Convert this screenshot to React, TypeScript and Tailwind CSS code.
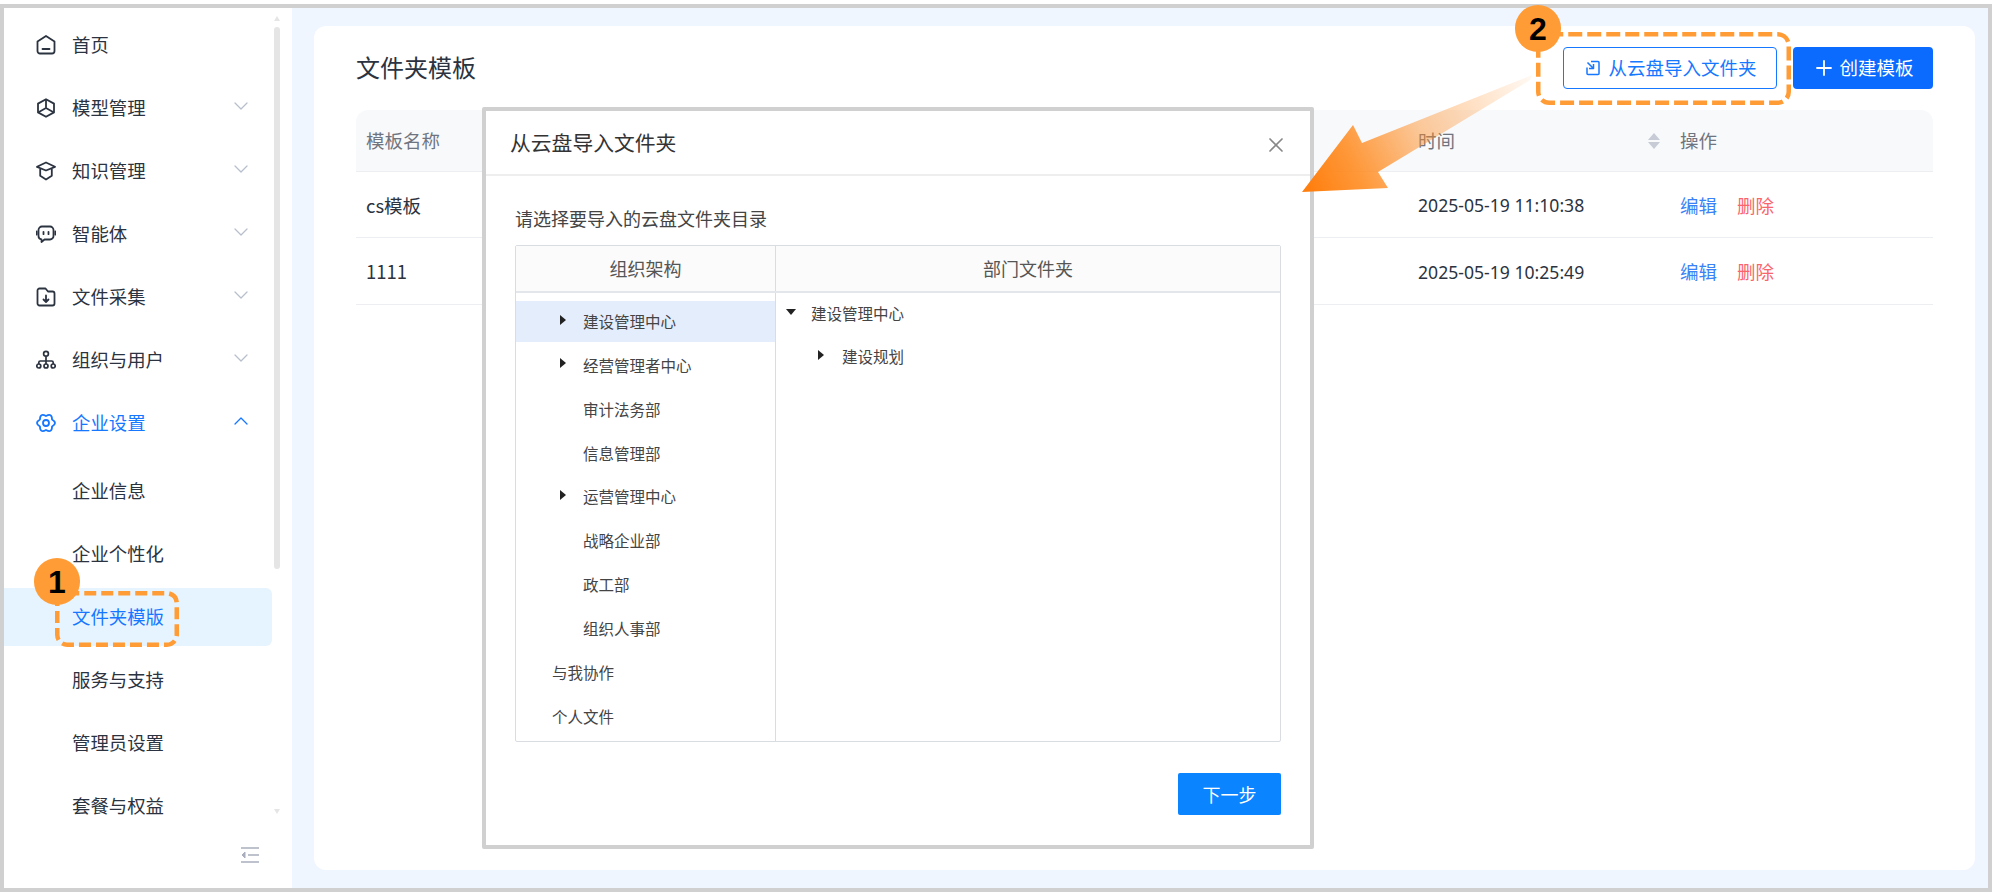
import React from "react";
import { ChevronDown, ChevronUp, Plus, X } from "lucide-react";

const font = "font-['Noto_Sans_CJK_SC','Noto_Sans',sans-serif]";

const HomeIcon = () => (
    <svg width="20" height="20" viewBox="0 0 20 20" fill="none" stroke="currentColor" strokeWidth="1.8" strokeLinejoin="round" strokeLinecap="round">
        <path d="M1.500 6.500 10 1l8.500 5.500V16a2.500 2.500 0 0 1-2.500 2.500H4A2.500 2.500 0 0 1 1.500 16z" />
        <path d="M6.500 14h7" />
    </svg>
);
const ModelIcon = () => (
    <svg width="20" height="20" viewBox="0 0 20 20" fill="none" stroke="currentColor" strokeWidth="1.8" strokeLinejoin="round">
        <path d="M10 1.200 18 5.600v8.800l-8 4.400-8-4.400V5.600z" />
        <path d="M10 1.500V10M10 10l7.500 4.200M10 10l-7.500 4.200" />
    </svg>
);
const KnowledgeIcon = () => (
    <svg width="20" height="20" viewBox="0 0 20 20" fill="none" stroke="currentColor" strokeWidth="1.8" strokeLinejoin="round">
        <path d="M10 1.500 19 5.800 10 9.500 1 5.800z" />
        <path d="M4.200 8v6.800L10 18.500l5.800-3.700V8" />
    </svg>
);
const AgentIcon = () => (
    <svg width="20" height="20" viewBox="0 0 20 20" fill="none" stroke="currentColor" strokeWidth="1.8" strokeLinejoin="round" strokeLinecap="round">
        <path d="M6 2.500h8A3.500 3.500 0 0 1 17.500 6v6a3.500 3.500 0 0 1-3.500 3.500H8.500l-3 2.500v-2.600A3.500 3.500 0 0 1 2.500 12V6A3.500 3.500 0 0 1 6 2.500z" />
        <path d="M.7 7.500v3M19.300 7.500v3M7.500 7.800v2.400M12.500 7.800v2.400" />
    </svg>
);
const CollectIcon = () => (
    <svg width="20" height="20" viewBox="0 0 20 20" fill="none" stroke="currentColor" strokeWidth="1.8" strokeLinejoin="round" strokeLinecap="round">
        <path d="M1.500 3.500a2 2 0 0 1 2-2h6l2.500 3h4.500a2 2 0 0 1 2 2v10a2 2 0 0 1-2 2h-13a2 2 0 0 1-2-2z" />
        <path d="M10 8.500v6M7.500 12.500 10 15l2.500-2.500" />
    </svg>
);
const OrgIcon = () => (
    <svg width="20" height="20" viewBox="0 0 20 20" fill="none" stroke="currentColor" strokeWidth="1.7">
        <circle cx="10" cy="3.800" r="2.400" />
        <circle cx="2.800" cy="16" r="2" />
        <circle cx="10" cy="16" r="2" />
        <circle cx="17.200" cy="16" r="2" />
        <path d="M2.800 14v-1.500A1.500 1.500 0 0 1 4.300 11h11.400a1.500 1.500 0 0 1 1.500 1.500V14M10 6.500V14" />
    </svg>
);
const GearIcon = () => (
    <svg width="20" height="20" viewBox="0 0 20 20" fill="none" stroke="currentColor" strokeWidth="1.8" strokeLinejoin="round">
        <path d="M16.060 6.500Q22 10 16.060 13.500Q16 20.400 10 17Q4 20.400 3.940 13.500Q-2 10 3.940 6.500Q4 -.4 10 3Q16 -.4 16.060 6.500z" />
        <circle cx="10" cy="10" r="3" />
    </svg>
);

const menuItems = [
    { label: "首页", icon: <HomeIcon /> },
    { label: "模型管理", icon: <ModelIcon />, arrow: true },
    { label: "知识管理", icon: <KnowledgeIcon />, arrow: true },
    { label: "智能体", icon: <AgentIcon />, arrow: true },
    { label: "文件采集", icon: <CollectIcon />, arrow: true },
    { label: "组织与用户", icon: <OrgIcon />, arrow: true },
];

const subItems = ["企业信息", "企业个性化", "文件夹模版", "服务与支持", "管理员设置", "套餐与权益"];

function Sidebar() {
    return (
        <div className="relative flex h-full w-[288px] shrink-0 bg-white">
            <div className="w-[268px] pt-[5px]">
                {menuItems.map((item) => (
                    <div key={item.label} className="flex h-[63px] items-center pl-[32px] pr-[19px] text-[18.400px] text-[#2b3340]">
                        <span className="mr-[16px] flex w-[20px] justify-center">{item.icon}</span>
                        <span className="flex-1">{item.label}</span>
                        {item.arrow && <ChevronDown size={24} strokeWidth={1.300} className="-mt-[4px] text-[#b8bfcc]" />}
                    </div>
                ))}
                <div className="flex h-[63px] items-center pl-[32px] pr-[19px] text-[18.400px] text-[#1677ff]">
                    <span className="mr-[16px] flex w-[20px] justify-center"><GearIcon /></span>
                    <span className="flex-1">企业设置</span>
                    <ChevronUp size={24} strokeWidth={1.300} className="-mt-[4px]" />
                </div>
                <div className="pt-[5px]">
                    {subItems.map((label) => (
                        <div
                            key={label}
                            className={`flex h-[63px] items-center pl-[68px] text-[18.400px] ${
                                label === "文件夹模版" ? "text-[#1677ff]" : "text-[#2b3340]"
                            }`}
                        >
                            {label === "文件夹模版" && (
                                <span className="absolute left-0 h-[58px] w-[268px] rounded-r-[6px] bg-[#e6f4ff]" />
                            )}
                            <span className="relative">{label}</span>
                        </div>
                    ))}
                </div>
            </div>
            {/* scrollbar */}
            <div className="absolute left-[270px] top-[19px] h-[542px] w-[6px] rounded-[3px] bg-[#e5e5e5]" />
            <div className="absolute left-[270px] top-[8px] h-0 w-0 border-x-[3px] border-b-[5px] border-x-transparent border-b-[#e5e5e5]" />
            <div className="absolute left-[270px] top-[801px] h-0 w-0 border-x-[3px] border-t-[5px] border-x-transparent border-t-[#e5e5e5]" />
            <svg className="absolute left-[237px] top-[839px]" width="18" height="16" viewBox="0 0 18 16" fill="none" stroke="#a9afbd" strokeWidth="1.600">
                <path d="M0 1h18M7 8h11M0 15h18" />
                <path d="M4 5 1 8l3 3z" fill="#a9afbd" strokeWidth="1" />
            </svg>
        </div>
    );
}

function Table() {
    const rows = [
        { name: "cs模板", time: "2025-05-19 11:10:38" },
        { name: "1111", time: "2025-05-19 10:25:49" },
    ];
    return (
        <div className="text-[18.500px]">
            <div className="flex h-[62px] items-center rounded-t-[12px] border-b border-[#eceef2] bg-[#f8f9fb] text-[#6f7580]">
                <span className="ml-[10px] w-[1052px]">模板名称</span>
                <span className="w-[230px]">时间</span>
                <span className="flex w-[32px] flex-col items-start gap-[2px]">
                    <span className="h-0 w-0 border-x-[6px] border-b-[7px] border-x-transparent border-b-[#c6cbd5]" />
                    <span className="h-0 w-0 border-x-[6px] border-t-[7px] border-x-transparent border-t-[#c6cbd5]" />
                </span>
                <span>操作</span>
            </div>
            {rows.map((row, i) => (
                <div key={row.name} className={`flex items-center border-b border-[#eceef2] pt-[2px] text-[#2b3340] ${i === 0 ? "h-[66px]" : "h-[67px]"}`}>
                    <span className="ml-[10px] w-[1052px]">{row.name}</span>
                    <span className="w-[262px] font-['Noto_Sans','Noto_Sans_CJK_SC',sans-serif] text-[17.600px]">{row.time}</span>
                    <span className="text-[#3b82f6]">编辑</span>
                    <span className="ml-[20px] text-[#f9656d]">删除</span>
                </div>
            ))}
        </div>
    );
}

const Caret = ({ down }: { down?: boolean }) =>
    down ? (
        <span className="mb-[4px] h-0 w-0 border-x-[5px] border-t-[6px] border-x-transparent border-t-[#222]" />
    ) : (
        <span className="mb-[4px] h-0 w-0 border-y-[5px] border-l-[6px] border-y-transparent border-l-[#222]" />
    );

function Modal() {
    const orgs = [
        { label: "建设管理中心", caret: true, active: true },
        { label: "经营管理者中心", caret: true },
        { label: "审计法务部" },
        { label: "信息管理部" },
        { label: "运营管理中心", caret: true },
        { label: "战略企业部" },
        { label: "政工部" },
        { label: "组织人事部" },
    ];
    return (
        <div className="absolute left-[482px] top-[107px] flex h-[742px] w-[832px] flex-col rounded-[2px] border-[4px] border-[#d0d0d0] bg-white">
            <div className="flex h-[65px] items-center justify-between border-b-2 border-[#eeeeee] pl-[24px] pr-[22px]">
                <span className="text-[20.800px] text-[#333]">从云盘导入文件夹</span>
                <X size={24} strokeWidth={1.700} className="mt-[4px] text-[#888]" />
            </div>
            <div className="px-[29px] pt-[29px]">
                <div className="text-[18px] leading-[26px] text-[#444]">请选择要导入的云盘文件夹目录</div>
                <div className="mt-[14px] flex h-[497px] w-[766px] flex-col rounded-[2px] border border-[#d9dde2]">
                    <div className="flex h-[47px] shrink-0 border-b-2 border-[#e3e6ea] bg-[#fbfbfb] text-[18px] text-[#555]">
                        <div className="flex w-[260px] items-center justify-center border-r border-[#d9dde2]">组织架构</div>
                        <div className="flex flex-1 items-center justify-center">部门文件夹</div>
                    </div>
                    <div className="flex flex-1">
                        <div className="flex w-[260px] flex-col gap-[2.900px] border-r border-[#d9dde2] pt-[8px] text-[15.500px] text-[#444]">
                            {orgs.map((org) => (
                                <div key={org.label} className={`flex h-[41px] items-center pl-[44px] ${org.active ? "bg-[#e4edfc]" : ""}`}>
                                    <span className="flex w-[23px] items-center">{org.caret && <Caret />}</span>
                                    {org.label}
                                </div>
                            ))}
                            <div className="flex h-[41px] items-center pl-[36px]">与我协作</div>
                            <div className="flex h-[41px] items-center pl-[36px]">个人文件</div>
                        </div>
                        <div className="flex-1 pl-[10px] text-[15.500px] text-[#444]">
                            <div className="flex h-[41px] items-center">
                                <span className="flex w-[25px] items-center"><Caret down /></span>
                                建设管理中心
                            </div>
                            <div className="flex h-[45px] items-center pl-[32px]">
                                <span className="flex w-[24px] items-center"><Caret /></span>
                                建设规划
                            </div>
                        </div>
                    </div>
                </div>
                <div className="mt-[31px] flex justify-end">
                    <button className="h-[42px] w-[103px] rounded-[2px] bg-[#0a84ff] text-[18px] text-white">下一步</button>
                </div>
            </div>
        </div>
    );
}

const Badge = ({ n, className }: { n: string; className: string }) => (
    <div className={`absolute flex h-[47px] w-[46px] items-center justify-center rounded-full bg-[#ff9c35] font-['Liberation_Sans',sans-serif] text-[32px] font-bold text-black ${className}`}>
        {n}
    </div>
);

export default function App() {
    return (
        <div className={`relative h-[892px] w-[1992px] overflow-hidden bg-white pt-[4px] ${font}`}>
            <div className="flex h-[888px] border-[4px] border-[#d0d0d0] bg-[#f0f6ff]">
                <Sidebar />
                <div className="flex-1 pb-[18px] pl-[22px] pr-[13px] pt-[18px]">
                    <div className="h-full rounded-[12px] bg-white px-[42px] pt-[21px]">
                        <div className="mb-[21px] flex h-[42px] items-center justify-between">
                            <h1 className="-mt-[2px] text-[24px] text-[#2b3340]">文件夹模板</h1>
                            <div className="flex gap-[16px]">
                                <button className="flex h-[42px] w-[214px] items-center justify-center gap-[7px] rounded-[4px] border border-[#1677ff] pl-[2px] text-[18.500px] text-[#1677ff]">
                                    <svg width="16" height="16" viewBox="0 0 16 16" fill="none" stroke="currentColor" strokeWidth="1.500" strokeLinejoin="round">
                                        <path d="M6 1.500h7a1 1 0 0 1 1 1v11a1 1 0 0 1-1 1H3a1 1 0 0 1-1-1V7.500" />
                                        <path d="M2.500 2.500 8.500 8.500M8.500 4v4.500H4" />
                                    </svg>
                                    从云盘导入文件夹
                                </button>
                                <button className="flex h-[42px] w-[140px] items-center justify-center gap-[3px] rounded-[4px] bg-[#0b6bff] text-[18.500px] text-white">
                                    <Plus size={24} strokeWidth={1.800} />
                                    创建模板
                                </button>
                            </div>
                        </div>
                        <Table />
                    </div>
                </div>
            </div>

            <Modal />

            {/* annotations */}
            <svg className="absolute left-0 top-0" width="1992" height="892" fill="none">
                <defs>
                    <linearGradient id="arrowFill" gradientUnits="userSpaceOnUse" x1="1532" y1="76" x2="1310" y2="190">
                        <stop offset="0" stopColor="#ff8a1e" stopOpacity="0.05" />
                        <stop offset="0.5" stopColor="#ff8a1e" stopOpacity="0.45" />
                        <stop offset="0.8" stopColor="#ff8a1e" stopOpacity="0.88" />
                        <stop offset="1" stopColor="#ff7f0f" />
                    </linearGradient>
                </defs>
                <path d="M1532 75 1362 143 1353 125 1302 192 1388 188 1378 172 1530 80z" fill="url(#arrowFill)" />
                <rect x="57.250" y="593.250" width="119.500" height="51.500" rx="10" stroke="#ff9c35" strokeWidth="4.500" strokeDasharray="12 5" />
                <rect x="1538.250" y="34.250" width="250.500" height="68.500" rx="11" stroke="#ff9c35" strokeWidth="4.500" strokeDasharray="14 5" />
            </svg>
            <Badge n="1" className="left-[34px] top-[558px]" />
            <Badge n="2" className="left-[1515px] top-[5px]" />
        </div>
    );
}
